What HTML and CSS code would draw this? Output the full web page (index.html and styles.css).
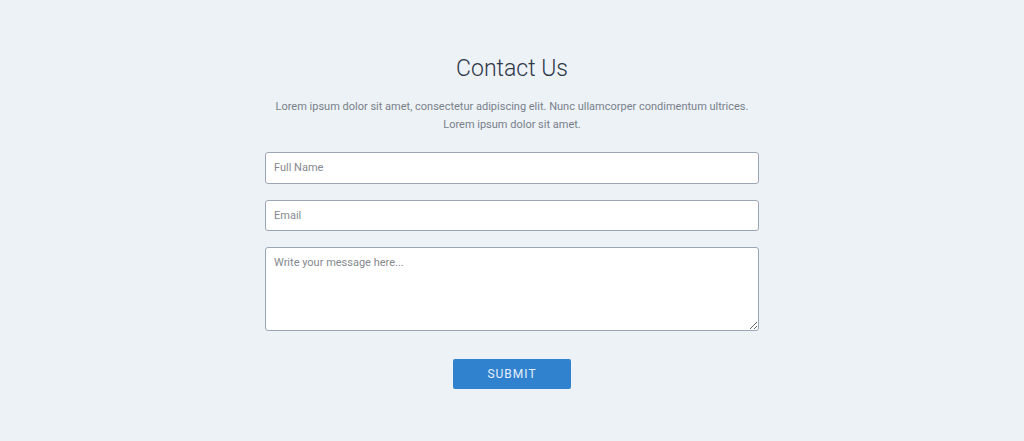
FILE: index.html
```html
<!DOCTYPE html>
<html lang="en">
<head>
<meta charset="utf-8">
<title>Contact Us</title>
<link rel="stylesheet" href="styles.css">
</head>
<body>
<main class="page">
  <section class="contact">
    <h1 class="contact-title">Contact Us</h1>
    <p class="contact-intro">Lorem ipsum dolor sit amet, consectetur adipiscing elit. Nunc ullamcorper condimentum ultrices.<br>Lorem ipsum dolor sit amet.</p>
    <form class="contact-form">
      <input class="field" type="text" placeholder="Full Name">
      <input class="field" type="email" placeholder="Email">
      <textarea class="field field-area" placeholder="Write your message here..."></textarea>
      <div class="actions">
        <button class="submit" type="button">SUBMIT</button>
      </div>
    </form>
  </section>
</main>
</body>
</html>
```

FILE: styles.css
```css
html, body {
  margin: 0;
  padding: 0;
  background: #edf2f7;
  font-family: Roboto, "Liberation Sans", sans-serif;
}
.page {
  display: flex;
  justify-content: center;
  padding-top: 53px;
}
.contact {
  width: 494px;
  display: flex;
  flex-direction: column;
  align-items: stretch;
}
.contact-title {
  margin: 0;
  font-size: 23px;
  line-height: 32px;
  font-weight: 300;
  color: #2d3748;
  text-align: center;
}
.contact-intro {
  margin: 13px -20px 0;
  font-size: 11px;
  line-height: 18px;
  color: #787f8a;
  text-align: center;
}
.contact-form {
  margin-top: 18px;
  display: flex;
  flex-direction: column;
  gap: 16px;
}
.field {
  display: block;
  box-sizing: border-box;
  width: 100%;
  height: 31.5px;
  margin: 0;
  padding: 0 8px;
  border: 1px solid #9aa5b5;
  border-radius: 3px;
  background: #fff;
  font-family: Roboto, "Liberation Sans", sans-serif;
  font-size: 11px;
  color: #2d3748;
  outline: none;
}
.field::placeholder {
  color: #85898f;
}
.field-area {
  height: 83.5px;
  padding: 8px;
  line-height: 14px;
  resize: vertical;
}
.actions {
  display: flex;
  justify-content: center;
  margin-top: 12px;
}
.submit {
  width: 118px;
  height: 30px;
  border: none;
  border-radius: 2px;
  background: #3182ce;
  color: #e6f0fa;
  font-family: Roboto, "Liberation Sans", sans-serif;
  font-size: 12px;
  letter-spacing: 1px;
  cursor: pointer;
}
```
